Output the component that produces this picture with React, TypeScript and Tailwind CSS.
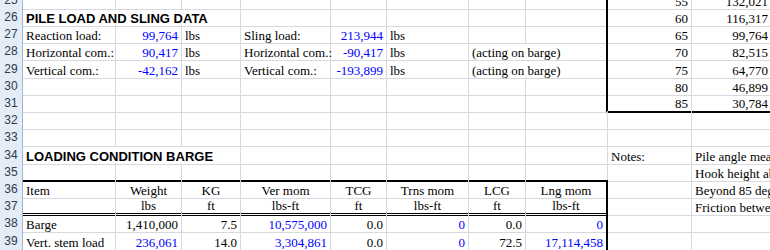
type Align = "l" | "r" | "c"

interface Cell {
  v: string
  a?: Align
  blue?: boolean
  bold?: boolean
}

interface Row {
  n: number
  h: 17 | 18
  cells: Record<number, Cell>
  // columns whose right gridline is hidden by overflowing text
  hide?: number[]
  thickB?: number[]
  doubleB?: number[]
  thickH?: boolean
}

const L = (v: string): Cell => ({ v, a: "l" })
const R = (v: string, blue = false): Cell => ({ v, a: "r", blue })
const C = (v: string): Cell => ({ v, a: "c" })
const H = (v: string): Cell => ({ v, a: "l", bold: true })

const upperBox = [8, 9]
const lowerCols = [0, 1, 2, 3, 4, 5, 6, 7]

const rows: Row[] = [
  { n: 25, h: 17, thickH: true, cells: { 8: R("55"), 9: R("132,021") } },
  { n: 26, h: 17, thickH: true, hide: [0, 1], cells: { 0: H("PILE LOAD AND SLING DATA"), 8: R("60"), 9: R("116,317") } },
  {
    n: 27, h: 17, thickH: true,
    cells: { 0: L("Reaction load:"), 1: R("99,764", true), 2: L("lbs"), 3: L("Sling load:"), 4: R("213,944", true), 5: L("lbs"), 8: R("65"), 9: R("99,764") },
  },
  {
    n: 28, h: 18, thickH: true, hide: [6],
    cells: { 0: L("Horizontal com.:"), 1: R("90,417", true), 2: L("lbs"), 3: L("Horizontal com.:"), 4: R("-90,417", true), 5: L("lbs"), 6: L("(acting on barge)"), 8: R("70"), 9: R("82,515") },
  },
  {
    n: 29, h: 17, thickH: true, hide: [6],
    cells: { 0: L("Vertical com.:"), 1: R("-42,162", true), 2: L("lbs"), 3: L("Vertical com.:"), 4: R("-193,899", true), 5: L("lbs"), 6: L("(acting on barge)"), 8: R("75"), 9: R("64,770") },
  },
  { n: 30, h: 17, thickH: true, cells: { 8: R("80"), 9: R("46,899") } },
  { n: 31, h: 17, thickH: true, thickB: upperBox, cells: { 8: R("85"), 9: R("30,784") } },
  { n: 32, h: 17, cells: {} },
  { n: 33, h: 18, cells: {} },
  { n: 34, h: 17, hide: [0, 1], cells: { 0: H("LOADING CONDITION BARGE"), 8: L("Notes:"), 9: L("Pile angle measured from horizontal") } },
  { n: 35, h: 17, thickB: lowerCols, cells: { 9: L("Hook height above deck") } },
  {
    n: 36, h: 17, thickH: true,
    cells: { 0: L("Item"), 1: C("Weight"), 2: C("KG"), 3: C("Ver mom"), 4: C("TCG"), 5: C("Trns mom"), 6: C("LCG"), 7: C("Lng mom"), 9: L("Beyond 85 degrees") },
  },
  {
    n: 37, h: 17, thickH: true, doubleB: lowerCols,
    cells: { 1: C("lbs"), 2: C("ft"), 3: C("lbs-ft"), 4: C("ft"), 5: C("lbs-ft"), 6: C("ft"), 7: C("lbs-ft"), 9: L("Friction between pile and guide") },
  },
  {
    n: 38, h: 18, thickH: true,
    cells: { 0: L("Barge"), 1: R("1,410,000"), 2: R("7.5"), 3: R("10,575,000", true), 4: R("0.0"), 5: R("0", true), 6: R("0.0"), 7: R("0", true) },
  },
  {
    n: 39, h: 17, thickH: true,
    cells: { 0: L("Vert. stem load"), 1: R("236,061", true), 2: R("14.0"), 3: R("3,304,861", true), 4: R("0.0"), 5: R("0", true), 6: R("72.5"), 7: R("17,114,458", true) },
  },
]

function cellClass(row: Row, col: number, cell?: Cell) {
  let cls = "relative flex items-end whitespace-nowrap leading-[15px] border-b px-[3px]"

  if (row.thickB?.includes(col)) cls += " border-b-2 border-b-black"
  else if (row.doubleB?.includes(col)) cls += " border-b-[3px] border-double border-b-black"
  else cls += " border-b-[#d6d9de]"

  if (col === 7 && row.thickH) cls += " border-r-2 border-r-black"
  else if (row.hide?.includes(col)) cls += " border-r-0"
  else cls += " border-r border-r-[#d6d9de]"

  if (cell?.a === "r") cls += " justify-end"
  if (cell?.a === "c") cls += " justify-center"
  if (cell?.blue) cls += " text-[#0000ff]"
  else cls += " text-black"
  if (cell?.bold) cls += " font-['Liberation_Sans',Arial,sans-serif] font-bold text-[13px]"

  return cls
}

function SheetRow({ row }: { row: Row }) {
  const cols = [0, 1, 2, 3, 4, 5, 6, 7, 8, 9]
  return (
    <div
      className={
        "grid grid-cols-[23px_93px_66px_59px_90px_56px_82px_57px_82px_84px_80px] " +
        (row.h === 18 ? "h-[18px]" : "h-[17px]")
      }
    >
      <div className="flex items-center justify-center bg-[#e4ecf7] border-r border-b border-[#9eb6ce] font-['Liberation_Sans',Arial,sans-serif] text-[12px] text-[#2d3b4d]">
        {row.n}
      </div>
      {cols.map((c) => {
        const cell = row.cells[c]
        return (
          <div key={c} className={cellClass(row, c, cell)}>
            {cell && (
              <span className={cell.a === "l" ? "overflow-visible z-10" : ""}>{cell.v}</span>
            )}
          </div>
        )
      })}
    </div>
  )
}

export default function App() {
  return (
    <div className="w-[770px] h-[250px] overflow-hidden bg-white font-['Liberation_Serif','Times_New_Roman',serif] text-[13px]">
      <div className="-mt-[9px] w-[772px]">
        {rows.map((row) => (
          <SheetRow key={row.n} row={row} />
        ))}
      </div>
    </div>
  )
}
